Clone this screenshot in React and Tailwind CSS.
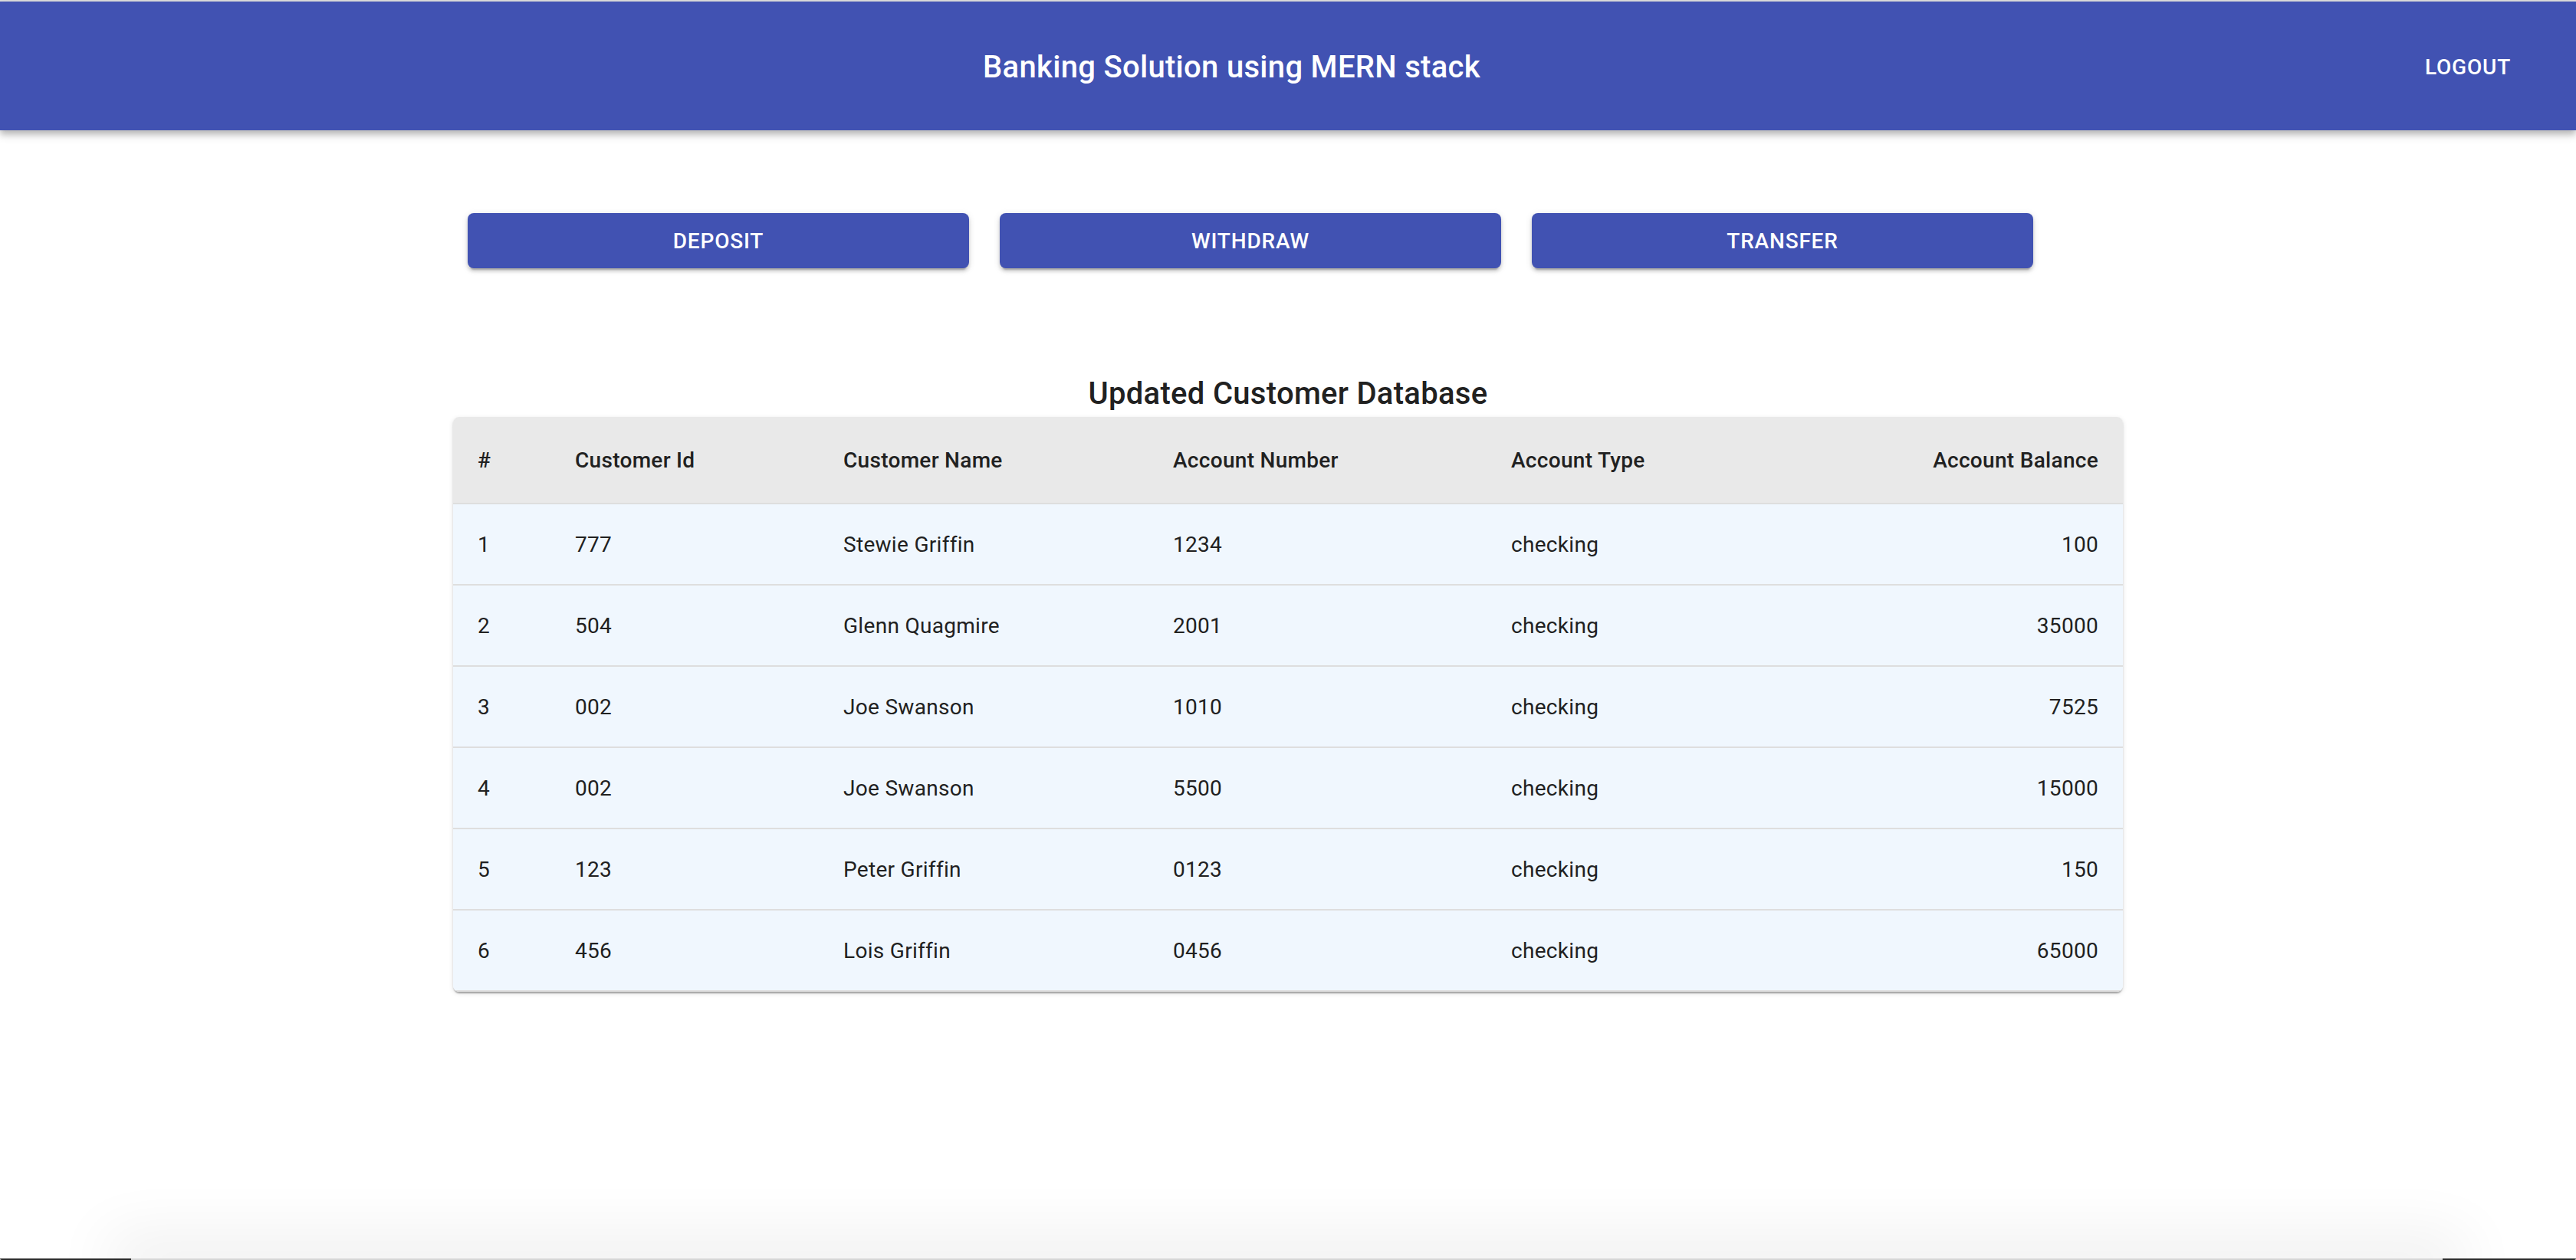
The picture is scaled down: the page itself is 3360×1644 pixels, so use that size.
import "react"

const customers = [
    {id: "777", name: "Stewie Griffin", account: "1234", type: "checking", balance: 100},
    {id: "504", name: "Glenn Quagmire", account: "2001", type: "checking", balance: 35000},
    {id: "002", name: "Joe Swanson", account: "1010", type: "checking", balance: 7525},
    {id: "002", name: "Joe Swanson", account: "5500", type: "checking", balance: 15000},
    {id: "123", name: "Peter Griffin", account: "0123", type: "checking", balance: 150},
    {id: "456", name: "Lois Griffin", account: "0456", type: "checking", balance: 65000},
]

function ActionButton({label}) {
    return <button className="w-[654px] h-[72px] pt-[2px] rounded-lg bg-[#4152b2] text-white text-[28px] font-medium tracking-[0.8px] uppercase shadow-[0_6px_2px_-4px_rgba(0,0,0,0.2),0_4px_4px_rgba(0,0,0,0.14),0_2px_10px_rgba(0,0,0,0.12)]">
        {label}
    </button>
}

export default function App() {
    return <div className="min-h-screen flex flex-col bg-white text-[#212121] font-['Roboto','Liberation_Sans',sans-serif]">
        <div className="h-[2px] bg-[#dedede]" />
        <header className="h-[168px] pt-[3px] bg-[#4152b2] flex items-center pl-[66px] pr-[69px] text-white shadow-[0_4px_8px_rgba(0,0,0,0.2),0_8px_10px_rgba(0,0,0,0.12)] relative">
            <h1 className="flex-1 text-center text-[40px] font-medium tracking-[0.3px] leading-[64px]">Banking Solution using MERN stack</h1>
            <button className="px-4 py-3 text-[28px] font-medium tracking-[0.8px]">LOGOUT</button>
        </header>

        <main className="w-[2178px] mx-auto">
            <div className="flex gap-10 pl-[19px] mt-[108px]">
                <ActionButton label="Deposit" />
                <ActionButton label="Withdraw" />
                <ActionButton label="Transfer" />
            </div>

            <h2 className="mt-[130px] pt-[2px] -mb-[2px] text-center text-[40px] font-medium tracking-[0.3px] leading-[64px]">Updated Customer Database</h2>

            <div className="rounded-lg overflow-hidden shadow-[0_4px_2px_-2px_rgba(0,0,0,0.2),0_2px_2px_rgba(0,0,0,0.14),0_2px_6px_rgba(0,0,0,0.12)]">
                <table className="w-full table-fixed border-collapse text-[28px] tracking-[0.3px]">
                    <colgroup>
                        <col className="w-[127px]" />
                        <col className="w-[350px]" />
                        <col className="w-[430px]" />
                        <col className="w-[441px]" />
                        <col className="w-[440px]" />
                        <col />
                    </colgroup>
                    <thead>
                        <tr className="bg-[#e9e9e9] border-b-2 border-[#dedede]">
                            <th className="px-8 pt-[33px] pb-[31px] text-left font-medium leading-[48px]">#</th>
                            <th className="px-8 pt-[33px] pb-[31px] text-left font-medium leading-[48px]">Customer Id</th>
                            <th className="px-8 pt-[33px] pb-[31px] text-left font-medium leading-[48px]">Customer Name</th>
                            <th className="px-8 pt-[33px] pb-[31px] text-left font-medium leading-[48px]">Account Number</th>
                            <th className="px-8 pt-[33px] pb-[31px] text-left font-medium leading-[48px]">Account Type</th>
                            <th className="px-8 pt-[33px] pb-[31px] text-right font-medium leading-[48px]">Account Balance</th>
                        </tr>
                    </thead>
                    <tbody>
                        {customers.map((c, i) => (
                            <tr key={i} className="bg-[#f0f7fe] border-b-2 border-[#dedede]">
                                <td className="px-8 pt-[33px] pb-[31px] leading-[40px]">{i + 1}</td>
                                <td className="px-8 pt-[33px] pb-[31px] leading-[40px]">{c.id}</td>
                                <td className="px-8 pt-[33px] pb-[31px] leading-[40px]">{c.name}</td>
                                <td className="px-8 pt-[33px] pb-[31px] leading-[40px]">{c.account}</td>
                                <td className="px-8 pt-[33px] pb-[31px] leading-[40px]">{c.type}</td>
                                <td className="px-8 pt-[33px] pb-[31px] leading-[40px] text-right">{c.balance}</td>
                            </tr>
                        ))}
                    </tbody>
                </table>
            </div>
        </main>

        {/* window edge at the bottom */}
        <div className="mt-auto flex h-[2px]">
            <div className="w-[171px] bg-[#2b2b2b] rounded-bl" />
            <div className="flex-1 bg-[#d6d6d6] shadow-[0_0_80px_30px_rgba(0,0,0,0.07)]" />
            <div className="w-[174px] bg-[#2b2b2b] rounded-br" />
        </div>
    </div>
}
